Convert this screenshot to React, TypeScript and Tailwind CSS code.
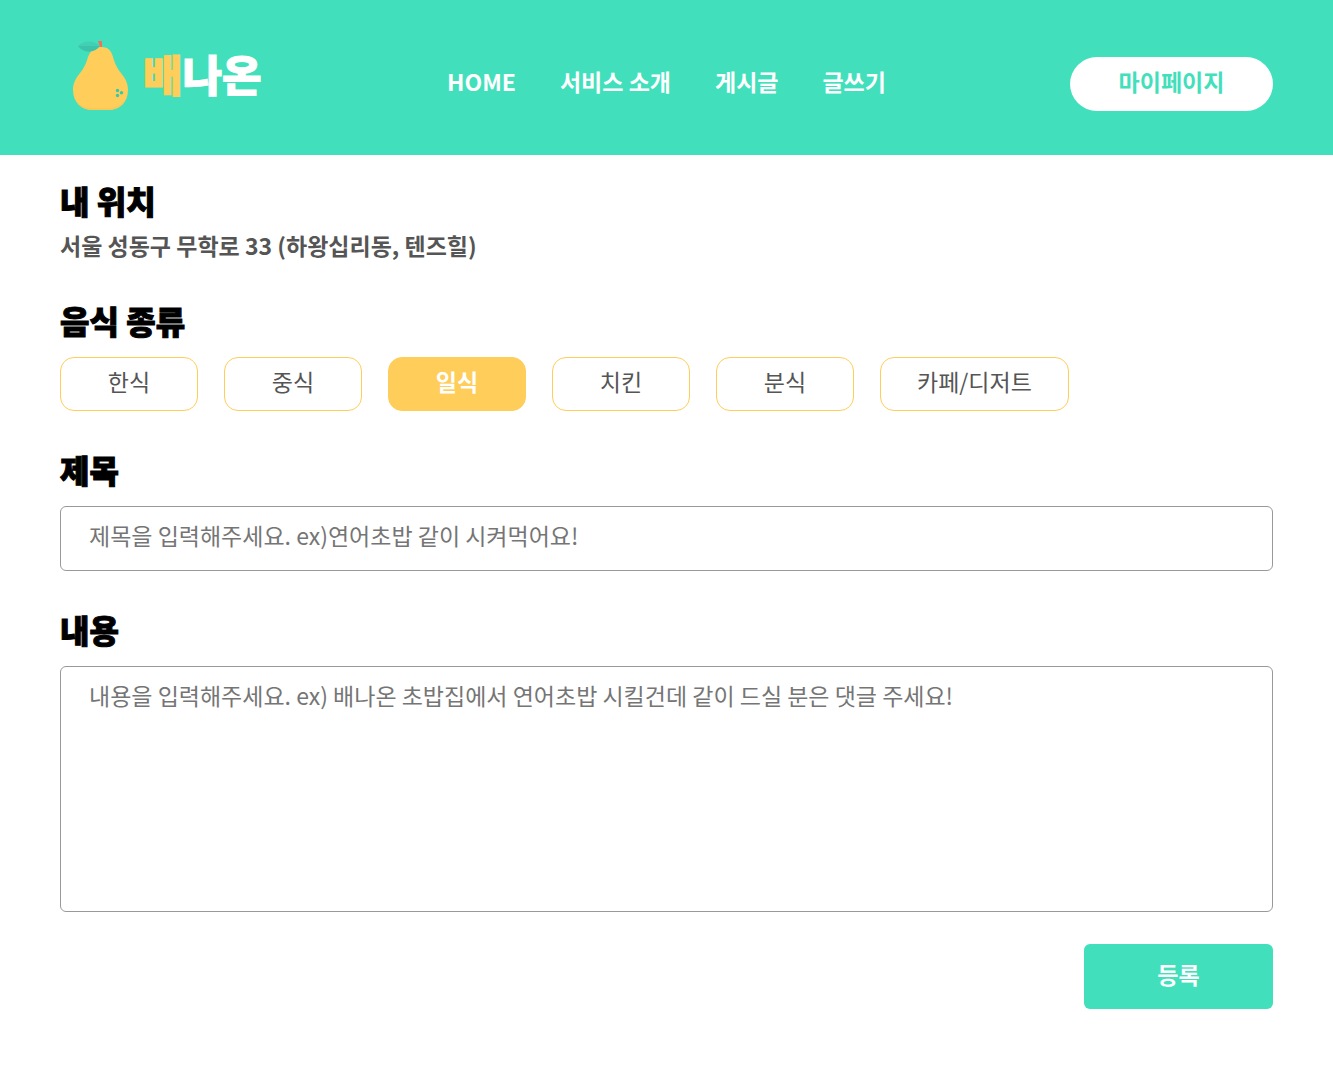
import { useState } from "react";

const links = ["HOME", "서비스 소개", "게시글", "글쓰기"];
const foods = ["한식", "중식", "일식", "치킨", "분식", "카페/디저트"];
const heading = "block text-[32px] leading-[48px] font-black text-black [-webkit-text-stroke:1px_black]";
const field = "mt-[13px] block w-full rounded-md border border-[#999] px-7 text-[#555] placeholder:text-[#757575] placeholder:opacity-100";

function Pear() {
  return (
    <svg width="56" height="70" viewBox="0 0 56 70" aria-hidden="true">
      <path d="M28 6C21 6 18 9 15 16C13 23 11 27 7 32C3 37 0 42 0 49C0 61 8 69 20 69H35C47 69 55 61 55 49C55 42 52 37 48 32C44 27 42 23 40 16C38 9 35 6 28 6Z" fill="#ffcd5a" />
      <path d="M1 54C3 63 10 67 20 67H35C45 67 52 63 54 54C52 64 45 69 35 69H20C10 69 3 64 1 54Z" fill="#fac856" />
      <path d="M25 0L29 0V6H27Z" fill="#f3705a" />
      <path d="M5 5C11 -1 21 -1 27 5Z" fill="#42cfb3" />
      <path d="M5 5C10 12 21 13 27 5Z" fill="#3cc4ab" />
      <circle cx="44.5" cy="49.5" r="1.7" fill="#36c9aa" />
      <circle cx="48.5" cy="51.7" r="1.7" fill="#36c9aa" />
      <circle cx="44.5" cy="54.5" r="1.7" fill="#36c9aa" />
    </svg>
  );
}

export default function App() {
  const [food, setFood] = useState("일식");
  return (
    <div className="bg-white pb-14 text-[23px] leading-[34px] text-[#555] [font-family:'Noto_Sans_CJK_KR',sans-serif]">
      <header className="grid h-[155px] grid-cols-[1fr_auto_1fr] items-center bg-[#42dfbc] px-[60px] pt-3">
        <a href="#" className="flex items-center gap-3.5 justify-self-start pb-4 pl-[13px]">
          <Pear />
          <span className="pb-1.5 text-[43px] leading-[60px] font-black text-white [-webkit-text-stroke:1px_white]">
            <span className="text-[#ffcd5a] [-webkit-text-stroke:1px_#ffcd5a]">배</span>나온
          </span>
        </a>
        <nav className="flex gap-11 pb-1.5 font-bold text-white">
          {links.map((l) => (
            <a key={l} href="#">{l}</a>
          ))}
        </nav>
        <button type="button" className="h-[54px] w-[203px] justify-self-end rounded-full bg-white pb-1.5 font-bold text-[#42dfbc]">
          마이페이지
        </button>
      </header>
      <form className="flex flex-col gap-[34px] px-[60px] pt-[21px]" onSubmit={(e) => e.preventDefault()}>
        <section>
          <h2 className={heading}>내 위치</h2>
          <p className="mt-1 font-bold">서울 성동구 무학로 33 (하왕십리동, 텐즈힐)</p>
        </section>
        <section>
          <h2 className={heading}>음식 종류</h2>
          <div className="mt-[13px] flex flex-wrap gap-[26px]">
            {foods.map((f) => (
              <button
                key={f}
                type="button"
                aria-pressed={f === food}
                onClick={() => setFood(f)}
                className={
                  f === food
                    ? "h-[54px] min-w-[138px] rounded-[14px] border border-[#ffcd5a] bg-[#ffcd5a] px-9 pb-1.5 font-bold text-white"
                    : "h-[54px] min-w-[138px] rounded-[14px] border border-[#ffcd5a] px-9 pb-1.5"
                }
              >
                {f}
              </button>
            ))}
          </div>
        </section>
        <section>
          <label htmlFor="title" className={heading}>제목</label>
          <input id="title" type="text" placeholder="제목을 입력해주세요. ex)연어초밥 같이 시켜먹어요!" className={`${field} h-[65px] pb-2`} />
        </section>
        <section>
          <label htmlFor="content" className={heading}>내용</label>
          <textarea
            id="content"
            placeholder="내용을 입력해주세요. ex) 배나온 초밥집에서 연어초밥 시킬건데 같이 드실 분은 댓글 주세요!"
            className={`${field} h-[246px] resize-none pt-[11px]`}
          />
          <button type="submit" className="mt-8 ml-auto block h-[65px] w-[189px] rounded-md bg-[#42dfbc] pb-1.5 font-bold text-white">
            등록
          </button>
        </section>
      </form>
    </div>
  );
}
